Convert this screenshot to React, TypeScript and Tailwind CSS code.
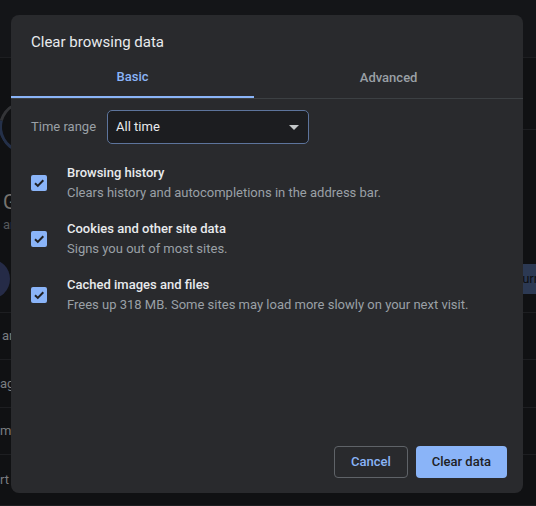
import React from "react"

// One option row in the "Basic" tab
function OptionRow({ title, desc }: { title: string; desc: string }) {
    return (
        <div className="flex items-center">
            <div className="flex h-4 w-4 shrink-0 items-center justify-center rounded-[2px] bg-[#8ab4f8]">
                <svg viewBox="0 0 16 16" className="h-4 w-4">
                    <path d="M4 8.2 L6.8 10.9 L12.3 5.2" fill="none" stroke="#202124" strokeWidth="2" />
                </svg>
            </div>
            <div className="ml-5 flex flex-col">
                <span className="text-[13px] leading-5 font-medium text-[#e8eaed]">{title}</span>
                <span className="text-[13px] leading-5 text-[#9aa0a6]">{desc}</span>
            </div>
        </div>
    )
}

export default function App() {
    return (
        <div className="relative h-[506px] w-[536px] overflow-hidden bg-[#101113] font-['Roboto',sans-serif]">
            {/* Settings page behind the dim overlay */}
            <div className="h-[58px] border-b border-[#1d1e21] bg-[#141518]" />
            <div className="flex h-[255px] border-b border-[#1d1e21]">
                <div className="flex w-[40px] flex-col">
                    <div className="ml-[-1px] mt-[43px] h-[52px] w-[52px] shrink-0 rotate-[-30deg] rounded-full border-[3px] border-[#243049] border-t-[#333437] border-r-[#333437]" />
                    <span className="ml-[3px] mt-[37px] text-[20px] leading-6 text-[#76736f]">G</span>
                    <span className="ml-[3px] mt-[3px] text-[13px] leading-4 text-[#55585c]">ar</span>
                    <div className="ml-[-30px] mt-[26px] h-[40px] w-[40px] shrink-0 rounded-full bg-[#252b47]" />
                </div>
                <div className="ml-auto flex w-[30px] flex-col">
                    <div className="h-[72px] border-b border-[#1d1e21]" />
                    <div className="ml-[-3px] mt-[134px] flex h-[30px] w-[60px] items-center rounded bg-[#2c3953] pl-[12px] text-[13px] text-[#0d0e10]">
                        Turn
                    </div>
                </div>
            </div>
            {["ar", "ag", "me", "rt"].map((t, i) => (
                <div
                    key={t}
                    className={`flex items-center border-b border-[#1d1e21] text-[13px] text-[#7a7d81] ${i === 0 ? "h-[47px] pl-[2px]" : i === 1 ? "h-[48px] pl-0" : i === 2 ? "h-[47px] pl-0" : "h-[51px] pl-0"}`}
                >
                    {t}
                </div>
            ))}

            {/* Dialog */}
            <div className="absolute left-[11px] top-[15px] flex h-[478px] w-[512px] flex-col rounded-lg bg-[#292a2d]">
                <div className="h-[41px] px-5 pt-[17px] text-[15px] leading-5 text-[#e8eaed]">Clear browsing data</div>

                <div className="flex border-b border-[#3c4043]">
                    <div className="flex h-[42px] flex-auto items-center justify-center border-b-2 border-[#8ab4f8] pt-[2px] text-[13px] font-medium text-[#8ab4f8]">
                        Basic
                    </div>
                    <div className="flex h-[42px] flex-auto items-center justify-center pt-[2px] text-[13px] font-medium text-[#9aa0a6]">
                        Advanced
                    </div>
                </div>

                <div className="mt-[11px] flex items-center px-5">
                    <span className="text-[13px] text-[#9aa0a6]">Time range</span>
                    <div className="ml-[11px] flex h-[34px] w-[202px] items-center justify-between rounded-[5px] border border-[#5d749c] bg-[#1c1d20] pl-2 pr-[9px]">
                        <span className="text-[13px] text-[#e8eaed]">All time</span>
                        <svg viewBox="0 0 10 5" className="h-[5px] w-[10px]">
                            <path d="M0 0 L10 0 L5 5 Z" fill="#c4c7c9" />
                        </svg>
                    </div>
                </div>

                <div className="mt-[19px] flex flex-col gap-4 px-5">
                    <OptionRow title="Browsing history" desc="Clears history and autocompletions in the address bar." />
                    <OptionRow title="Cookies and other site data" desc="Signs you out of most sites." />
                    <OptionRow title="Cached images and files" desc="Frees up 318 MB. Some sites may load more slowly on your next visit." />
                </div>

                <div className="mt-auto flex justify-end gap-2 px-4 pb-[15px]">
                    <button className="h-8 rounded border border-[#5f6368] px-4 text-[13px] font-medium text-[#8ab4f8]">
                        Cancel
                    </button>
                    <button className="h-8 rounded bg-[#8ab4f8] px-4 text-[13px] font-medium text-[#202124]">
                        Clear data
                    </button>
                </div>
            </div>
        </div>
    )
}
